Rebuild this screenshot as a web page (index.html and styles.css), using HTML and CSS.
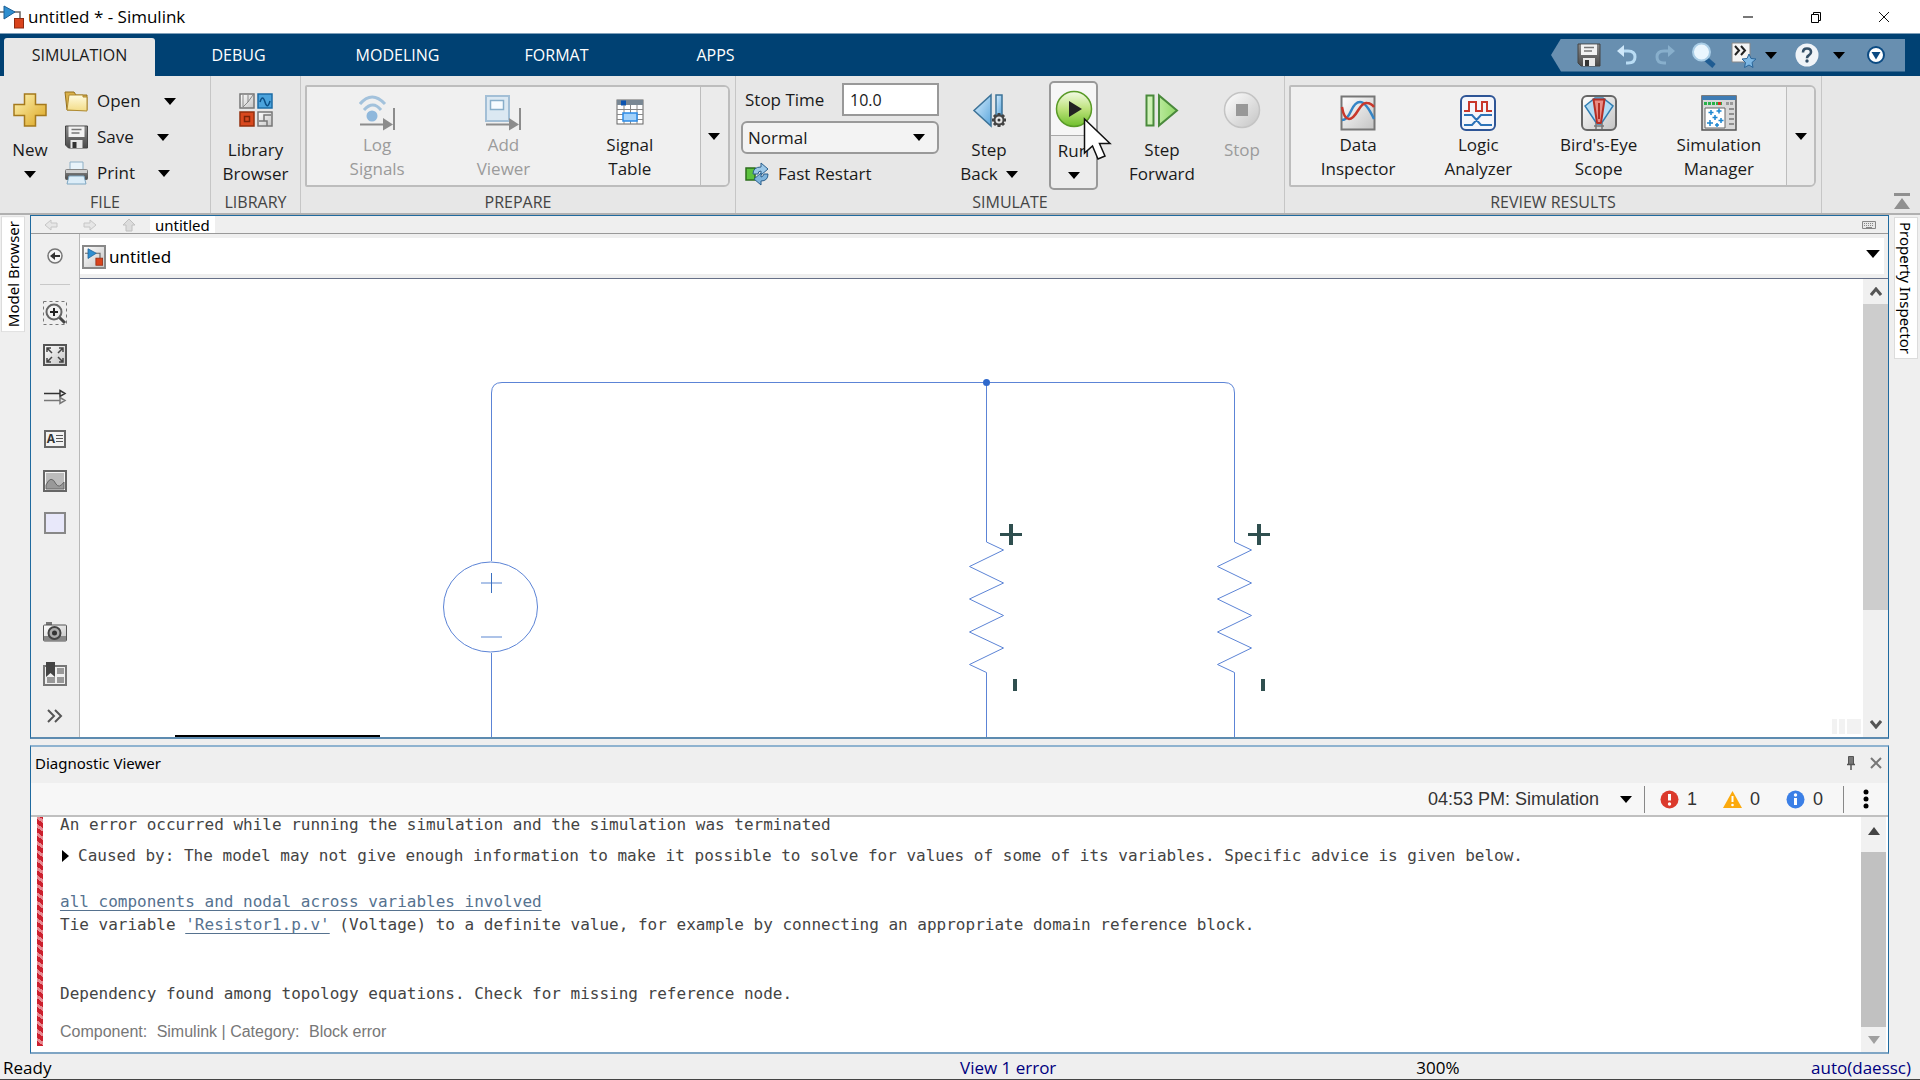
FILE: index.html
```html
<!DOCTYPE html>
<html lang="en">
<head>
<meta charset="utf-8">
<title>untitled * - Simulink</title>
<link rel="stylesheet" href="styles.css">
</head>
<body>
<svg class="defs" aria-hidden="true">
  <defs>
    <linearGradient id="gold" x1="0" y1="0" x2="1" y2="1"><stop offset="0" stop-color="#fff6b8"/><stop offset="1" stop-color="#dba31c"/></linearGradient>
    <linearGradient id="paper" x1="0" y1="0" x2="0" y2="1"><stop offset="0" stop-color="#fffbe0"/><stop offset="1" stop-color="#f3dc86"/></linearGradient>
    <linearGradient id="steel" x1="0" y1="0" x2="0" y2="1"><stop offset="0" stop-color="#8a8a8a"/><stop offset="1" stop-color="#4a4a4a"/></linearGradient>
    <linearGradient id="silver" x1="0" y1="0" x2="1" y2="1"><stop offset="0" stop-color="#ffffff"/><stop offset="1" stop-color="#c4c4c4"/></linearGradient>
    <linearGradient id="sky" x1="0" y1="0" x2="1" y2="1"><stop offset="0" stop-color="#d9efff"/><stop offset="1" stop-color="#5ba6dc"/></linearGradient>
    <linearGradient id="green" x1="0" y1="0" x2="0" y2="1"><stop offset="0" stop-color="#f4fbe6"/><stop offset=".5" stop-color="#bde27c"/><stop offset="1" stop-color="#6fbf2c"/></linearGradient>
    <linearGradient id="mint" x1="0" y1="0" x2="1" y2="0"><stop offset="0" stop-color="#d6f5c0"/><stop offset="1" stop-color="#8fd866"/></linearGradient>
    <symbol id="caret" viewBox="0 0 12 7"><path d="M0 0h12L6 7z"/></symbol>
    <symbol id="disk" viewBox="0 0 24 24"><path d="M1 1h22v22H4l-3-3z" fill="url(#steel)" stroke="#444"/><path d="M4 1.500h16V12H4z" fill="#f2f2f2"/><path d="M7 4.500h10M7 8h8" stroke="#777" stroke-width="1.500"/><path d="M6 15h12v8H6z" fill="#e8e8e8"/><path d="M8 17h4v6H8z" fill="#333"/></symbol>
    <symbol id="model" viewBox="0 0 24 24"><path d="M0 7h4M14 7h6v7" fill="none" stroke="#666" stroke-width="1.500"/><path d="M4 1l11 6-11 7z" fill="#2f8fd0" stroke="#1d5f94"/><rect x="14.500" y="13.500" width="9" height="9.500" fill="#d9431c" stroke="#8f2a10"/></symbol>
  </defs>
</svg>

<header class="titlebar">
  <svg class="app-icon" viewBox="0 0 24 24"><use href="#model"/></svg>
  <span class="title">untitled * - Simulink</span>
  <div class="window-buttons">
    <button aria-label="Minimize"><svg width="12" height="12"><path d="M1 6h10" stroke="#777" stroke-width="2"/></svg></button>
    <button aria-label="Restore"><svg width="12" height="12" fill="none" stroke="#000"><path d="M1.500 3.500h7v8h-7zM3.500 3.500v-2h7v8h-2"/></svg></button>
    <button aria-label="Close"><svg width="12" height="12" fill="none" stroke="#111"><path d="M1 1l10 10M11 1L1 11"/></svg></button>
  </div>
</header>

<nav class="tabstrip">
  <a class="tab active" href="#">SIMULATION</a>
  <a class="tab" href="#">DEBUG</a>
  <a class="tab" href="#">MODELING</a>
  <a class="tab" href="#">FORMAT</a>
  <a class="tab" href="#">APPS</a>
  <div class="quick">
    <button aria-label="Save"><svg width="24" height="24"><use href="#disk"/></svg></button>
    <button aria-label="Undo"><svg width="24" height="24" viewBox="0 0 24 24"><path d="M7 8h6q7 0 7 6t-7 6h-2" fill="none" stroke="#b9dcf4" stroke-width="3"/><path d="M2 8l7-6v12z" fill="#cfe8fa"/></svg></button>
    <button aria-label="Redo"><svg width="24" height="24" viewBox="0 0 24 24"><path d="M17 8h-6q-7 0-7 6t7 6h2" fill="none" stroke="#88afcc" stroke-width="3"/><path d="M22 8l-7-6v12z" fill="#88afcc"/></svg></button>
    <button class="q-search" aria-label="Search"><svg width="26" height="26" viewBox="0 0 26 26"><path d="M15 17l8 7" stroke="#1f5c92" stroke-width="5"/><circle cx="10.500" cy="10" r="8.500" fill="#eaf6fe" stroke="#a9cde6" stroke-width="2"/></svg></button>
    <button class="q-star" aria-label="Favorites"><svg width="25" height="26" viewBox="0 0 25 26"><path d="M1 1h18v19H1z" fill="#f4f4f4" stroke="#888"/><path d="M4 4l4 4.500L4 13M10 4l4 4.500-4 4.500" fill="none" stroke="#222" stroke-width="2"/><path d="M18 12l2 4.500 5 .5-4 3.500 1 5-4-2.500-4.500 2.500 1-5-3.500-3.500 5-.5z" fill="#7eb8e4" stroke="#2a6498"/></svg></button>
    <button class="q-star-menu" aria-label="Favorites menu"><svg class="caret"><use href="#caret"/></svg></button>
    <button class="q-help" aria-label="Help"><svg width="24" height="24" viewBox="0 0 24 24"><circle cx="12" cy="12" r="11.500" fill="#f0f4f8"/><path d="M8 9.500q0-4 4-4t4 3.500q0 2-2 3.200t-2 3" fill="none" stroke="#355067" stroke-width="2.600"/><circle cx="12" cy="18" r="1.700" fill="#355067"/></svg></button>
    <button aria-label="Help menu"><svg class="caret"><use href="#caret"/></svg></button>
    <button class="q-more" aria-label="More"><svg width="18" height="18" viewBox="0 0 18 18"><circle cx="9" cy="9" r="8" fill="#fff" stroke="#0b4a82" stroke-width="2"/><path d="M4.500 6h9L9 13.500z" fill="#0b4a82"/></svg></button>
  </div>
</nav>

<section class="ribbon" aria-label="Simulation tools">
  <div class="group file">
    <div class="group-body">
      <button class="big">
        <svg width="34" height="34" viewBox="0 0 34 34"><path d="M11.500 1h11v10.500H33v11H22.500V33h-11V22.500H1v-11h10.500z" fill="url(#gold)" stroke="#a5791c" stroke-width="1.500"/></svg>
        <span>New</span><span class="drop"><svg class="caret"><use href="#caret"/></svg></span>
      </button>
      <div class="rows">
        <button class="row"><svg width="25" height="24" viewBox="0 0 25 24"><path d="M1 3h9l2 3h11v15H3z" fill="#d9b04a" stroke="#94701c"/><path d="M5 6h14v2h4v14L3 21z" fill="url(#paper)" stroke="#b08b32"/></svg><span>Open</span><svg class="caret"><use href="#caret"/></svg></button>
        <button class="row"><svg width="25" height="24"><use href="#disk"/></svg><span>Save</span><svg class="caret"><use href="#caret"/></svg></button>
        <button class="row"><svg width="25" height="24" viewBox="0 0 25 24"><path d="M6 1h13v9H6z" fill="#e8f3fa" stroke="#8fb0c6"/><rect x="1" y="8" width="23" height="11" rx="2" fill="url(#steel)"/><path d="M2 9h21v3H2z" fill="#d0d0d0"/><path d="M5 15h15l2 8H3z" fill="#dcedf8" stroke="#7fa7c2"/></svg><span>Print</span><svg class="caret"><use href="#caret"/></svg></button>
      </div>
    </div>
    <h2>FILE</h2>
  </div>

  <div class="group library">
    <div class="group-body">
      <button class="big">
        <svg width="34" height="34" viewBox="0 0 34 34"><rect x="1" y="1" width="14" height="14" fill="url(#silver)" stroke="#777" stroke-width="1.500"/><path d="M4 2v12l5-5V2M9 9l5-7" fill="none" stroke="#888"/><rect x="19" y="1" width="14" height="14" fill="#4ba3dc" stroke="#1c6ca6" stroke-width="1.500"/><path d="M21 9q2.500-8 5 0t5-1" fill="none" stroke="#0c4f86" stroke-width="1.500"/><rect x="1" y="19" width="14" height="14" fill="#d9491f" stroke="#93300f" stroke-width="1.500"/><rect x="5.500" y="23.500" width="5" height="5" fill="none" stroke="#7c2409" stroke-width="1.500"/><rect x="19" y="19" width="14" height="14" fill="url(#silver)" stroke="#777" stroke-width="1.500"/><path d="M20 28h5v-6h7M25 28h3v5" fill="none" stroke="#777" stroke-width="1.500"/></svg>
        <span>Library</span><span>Browser</span>
      </button>
    </div>
    <h2>LIBRARY</h2>
  </div>

  <div class="group prepare">
    <div class="group-body">
      <div class="gallery">
        <button disabled><svg width="36" height="36" viewBox="0 0 36 36"><path d="M1 9q12-14 25 0M5 15q9-10 17 0" fill="none" stroke="#a3c2dc" stroke-width="3"/><circle cx="13" cy="21" r="5.500" fill="#8fb8dc"/><path d="M1 29.500h25M35 13v22" stroke="#8c8c8c" stroke-width="2"/><path d="M24 23l10 6.500-10 6z" fill="#8c8c8c"/></svg><span>Log</span><span>Signals</span></button>
        <button disabled><svg width="36" height="36" viewBox="0 0 36 36"><rect x="1" y="1" width="23" height="25" fill="#dbe8f2" stroke="#a3bfd6" stroke-width="2"/><rect x="5.500" y="5.500" width="13" height="9" fill="#f6fbff" stroke="#88aeca" stroke-width="1.500"/><path d="M1 29.500h25M35 13v22" stroke="#8c8c8c" stroke-width="2"/><path d="M24 23l10 6.500-10 6z" fill="#8c8c8c"/></svg><span>Add</span><span>Viewer</span></button>
        <button><svg width="36" height="36" viewBox="0 0 36 36"><rect x="5" y="5" width="26" height="24" fill="#fff" stroke="#666"/><path d="M5 5h26v5H5z" fill="#7a8894"/><path d="M9 5.500h5v5H9z" fill="#0b54b0"/><path d="M5 14.500h26M5 19.500h26M5 24.500h26M12 10v19M18.500 10v19M25 10v19" stroke="#888"/><rect x="11" y="18" width="14" height="8" fill="#a4d2fa" stroke="#2b8ae6" stroke-width="1.500"/></svg><span>Signal</span><span>Table</span></button>
        <button class="more" aria-label="More prepare tools"><svg class="caret"><use href="#caret"/></svg></button>
      </div>
    </div>
    <h2>PREPARE</h2>
  </div>

  <div class="group simulate">
    <div class="group-body">
      <div class="settings">
        <div class="stop-time"><label for="stop">Stop Time</label><input id="stop" type="text" value="10.0"></div>
        <div class="select mode"><select aria-label="Simulation mode"><option>Normal</option></select><svg class="caret"><use href="#caret"/></svg></div>
        <button class="row fast"><svg width="25" height="24" viewBox="0 0 25 24"><rect x="1" y="6" width="9" height="12" fill="#5cc23e" stroke="#2c6e1c" stroke-width="1.500"/><path d="M8 12q0-7 8-7V1l7 6-7 6V9q-3 0-3 3z" fill="#9cc8e8" stroke="#2b5f8c"/><path d="M23 12q0 7-7 7v4l-7-6 7-6v4q2 0 3-3z" fill="#7fb4dc" stroke="#2b5f8c"/></svg><span>Fast Restart</span></button>
      </div>
      <button class="big step">
        <svg width="36" height="36" viewBox="0 0 36 36"><path d="M20 3v31L3 18.500z" fill="url(#sky)" stroke="#3d7398" stroke-width="1.500"/><path d="M25 3h6v20h-6z" fill="url(#sky)" stroke="#3d7398" stroke-width="1.500"/><path d="M28 21v14M21 28h14M23 23l10 10M33 23l-10 10" stroke="#444" stroke-width="3"/><circle cx="28" cy="28" r="4.500" fill="#e4e4e4" stroke="#444" stroke-width="2"/><circle cx="28" cy="28" r="1.500" fill="#333"/></svg>
        <span>Step</span><span>Back <svg class="caret"><use href="#caret"/></svg></span>
      </button>
      <div class="run">
        <button class="run-main" aria-label="Run simulation"><svg width="38" height="38" viewBox="0 0 38 38"><circle cx="19" cy="19" r="17.500" fill="url(#green)" stroke="#5a9b28" stroke-width="1.500"/><path d="M14 11v16l13-8z" fill="#222"/></svg></button>
        <button class="run-menu"><span>Run</span><span class="drop"><svg class="caret"><use href="#caret"/></svg></span></button>
        <svg class="pointer" viewBox="0 0 30 44"><path d="M1.500 2v34l8-7 5.500 13 7-3-5.500-12.500H27z" fill="#fff" stroke="#111" stroke-width="1.500"/></svg>
      </div>
      <button class="big step forward">
        <svg width="36" height="36" viewBox="0 0 36 36"><path d="M2.500 3.500h7v30h-7zM15 3.500v30L33 18.500z" fill="url(#mint)" stroke="#4a8a3c" stroke-width="2"/></svg>
        <span>Step</span><span>Forward</span>
      </button>
      <button class="big step stop" disabled>
        <svg width="38" height="38" viewBox="0 0 38 38"><circle cx="19" cy="19" r="17.500" fill="url(#silver)" stroke="#c4c4c4" stroke-width="1.500"/><path d="M13 13h12v12H13z" fill="#989898"/></svg>
        <span>Stop</span>
      </button>
    </div>
    <h2>SIMULATE</h2>
  </div>

  <div class="group review">
    <div class="group-body">
      <div class="gallery">
        <button><svg width="36" height="36" viewBox="0 0 36 36"><rect x="1.500" y="1.500" width="33" height="33" fill="url(#silver)" stroke="#777" stroke-width="2"/><path d="M2 25q5 0 9-9t9-9q6 0 14 17" fill="none" stroke="#3585c6" stroke-width="2.500"/><path d="M2 12q2 12 7 12 4 0 9-8.500T27 8q4 0 7 4" fill="none" stroke="#c8382c" stroke-width="2.500"/></svg><span>Data</span><span>Inspector</span></button>
        <button><svg width="36" height="36" viewBox="0 0 36 36"><rect x="1" y="1" width="34" height="34" rx="5" fill="#f4f6fb" stroke="#2e5596" stroke-width="2"/><path d="M4 16h5V7h7v9h6V7h5v9h5" fill="none" stroke="#c8382c" stroke-width="2"/><path d="M4 20h8l9 10h11M4 30h8l9-10h11" fill="none" stroke="#2b72b8" stroke-width="2"/></svg><span>Logic</span><span>Analyzer</span></button>
        <button><svg width="36" height="36" viewBox="0 0 36 36"><rect x="1" y="1" width="34" height="34" rx="5" fill="url(#silver)" stroke="#666" stroke-width="2"/><path d="M4 11l10-8h8l10 8-12 18h-4z" fill="#b4dcf4" stroke="#2f7db2" stroke-width="1.500"/><path d="M12.500 4.500h11L20 28h-4z" fill="#e98c84" stroke="#b52e24" stroke-width="2"/><path d="M18 8v16" stroke="#b52e24" stroke-width="2"/><path d="M15 28v6M21 28v6M13 31h10" stroke="#777" stroke-width="1.500"/></svg><span>Bird's-Eye</span><span>Scope</span></button>
        <button><svg width="36" height="36" viewBox="0 0 36 36"><rect x="1" y="1" width="34" height="34" fill="#d8d8d8" stroke="#555" stroke-width="1.500"/><path d="M1 1h34v4H1z" fill="#3f7cb4"/><path d="M3 8.500h18" stroke="#2ab04a" stroke-width="3" stroke-dasharray="3 1"/><path d="M17 8.500h3" stroke="#d83020" stroke-width="3"/><path d="M25 8.500h8" stroke="#999" stroke-width="3" stroke-dasharray="3 1"/><path d="M4 13h20v20H4z" fill="#fff" stroke="#666"/><path d="M10 15v5M7.500 17.500h5M18 13.500v5M15.500 16h5M14 20v5M11.500 22.500h5M20 23v5M17.500 25.500h5M9 25v6M6 28h6M16 28v4M14 30h4" stroke="#1c86d0" stroke-width="1.500"/><path d="M28 14h5M28 19h5M28 24h5M28 29h5" stroke="#777" stroke-width="1.500"/></svg><span>Simulation</span><span>Manager</span></button>
        <button class="more" aria-label="More review tools"><svg class="caret"><use href="#caret"/></svg></button>
      </div>
    </div>
    <h2>REVIEW RESULTS</h2>
  </div>
  <button class="collapse" aria-label="Minimize toolstrip"><svg width="16" height="16"><path d="M0 0h16v3H0zM8 5l8 11H0z" fill="#909090"/></svg></button>
</section>

<main class="workspace">
  <aside class="side left"><button class="side-tab">Model Browser</button></aside>

  <div class="center">
    <section class="editor" aria-label="Model editor">
      <div class="doc-tabs">
        <button aria-label="Back"><svg width="14" height="12"><path d="M1 6l6-5v3h6v4H7v3z" fill="#e6e6e6" stroke="#c6c6c6"/></svg></button>
        <button aria-label="Forward"><svg width="14" height="12"><path d="M13 6L7 1v3H1v4h6v3z" fill="#e6e6e6" stroke="#c6c6c6"/></svg></button>
        <button aria-label="Up"><svg width="14" height="14"><path d="M7 1l6 6h-3v6H4V7H1z" fill="#dcdcdc" stroke="#c0c0c0"/></svg></button>
        <a class="doc" href="#">untitled</a>
        <svg class="keyboard" width="14" height="8"><path d="M.5.500h13v7H.5z" fill="#e8e8e8" stroke="#888"/><path d="M2 2.500h10M2 4.500h10" stroke="#888" stroke-dasharray="1 1"/><path d="M4 6.500h6" stroke="#888"/></svg>
      </div>
      <div class="editor-body">
        <div class="palette">
          <button aria-label="Hide browser"><svg width="16" height="16" viewBox="0 0 16 16"><circle cx="8" cy="8" r="7" fill="#f6f6f6" stroke="#777" stroke-width="1.500"/><path d="M3 8l5-4v3h5v2H8v3z" fill="#333"/></svg></button>
          <hr>
          <button aria-label="Zoom"><svg width="24" height="24" viewBox="0 0 24 24"><path d="M.5.500h23v23H.5z" fill="none" stroke="#777" stroke-dasharray="3 3"/><path d="M16 16l6 6" stroke="#444" stroke-width="3"/><circle cx="11" cy="11" r="7.500" fill="#f2f2f2" stroke="#666" stroke-width="2"/><path d="M11 7v8M7 11h8" stroke="#222" stroke-width="2"/></svg></button>
          <button aria-label="Fit to view"><svg width="24" height="22" viewBox="0 0 24 22"><rect x="1" y="1" width="22" height="20" fill="url(#silver)" stroke="#555" stroke-width="2"/><path d="M4 8V4h4M4 4l5 5M16 4h4v4M20 4l-5 5M4 14v4h4M4 18l5-5M16 18h4v-4M20 18l-5-5" fill="none" stroke="#444" stroke-width="1.500"/></svg></button>
          <button aria-label="Sample time"><svg width="24" height="16" viewBox="0 0 24 16" fill="none" stroke-width="1.500"><path d="M1 4.500h16M17 1.500l5 3-5 3z" stroke="#333"/><path d="M1 11.500h16M17 8.500l5 3-5 3z" stroke="#777"/></svg></button>
          <button aria-label="Annotation" class="annotation"><span>A</span><svg width="7" height="10"><path d="M0 1.500h7M0 4.500h7M0 7.500h7" stroke="#555"/></svg></button>
          <button aria-label="Image"><svg width="24" height="22" viewBox="0 0 24 22"><rect x="1" y="1" width="22" height="20" fill="#f4f4f4" stroke="#666" stroke-width="2"/><path d="M3 3h18v16H3z" fill="#bcbcbc"/><path d="M3 15q5-11 10-1 3 5 8-2v7H3z" fill="#999" stroke="#666"/></svg></button>
          <button aria-label="Area"><svg width="22" height="22"><path d="M1 1h20v20H1z" fill="#e8e8fa" stroke="#888" stroke-width="2"/></svg></button>
          <button class="bottom" aria-label="Screenshot"><svg width="24" height="20" viewBox="0 0 24 20"><path d="M3 0h6v4H3z" fill="#777"/><rect x=".5" y="3" width="23" height="16" rx="1" fill="url(#silver)" stroke="#555"/><path d="M1 14h22v5H1z" fill="#888"/><circle cx="11.500" cy="11" r="6" fill="#aaa" stroke="#444" stroke-width="2"/><circle cx="11.500" cy="11" r="2.500" fill="#333"/></svg></button>
          <button aria-label="Viewmarks"><svg width="24" height="24" viewBox="0 0 24 24"><rect x="1" y="4" width="22" height="19" fill="#f0f0f0" stroke="#777" stroke-width="2"/><path d="M14 6h7v6h-7zM14 15h7v6h-7zM4 15h8v6H4z" fill="#999"/><path d="M3 0h9v15l-4.500-4L3 15z" fill="#444"/></svg></button>
          <button aria-label="More"><svg width="16" height="14" fill="none" stroke="#555" stroke-width="2"><path d="M1 1l6 6-6 6M8 1l6 6-6 6"/></svg></button>
        </div>
        <div class="stage">
          <div class="address">
            <svg class="crumb-icon" viewBox="0 0 24 24"><rect x="1" y="1" width="22" height="22" fill="url(#silver)" stroke="#888" stroke-width="2"/><g transform="translate(3 3) scale(.75)"><use href="#model" width="24" height="24"/></g></svg>
            <span>untitled</span>
            <button aria-label="Model history"><svg class="caret wide"><use href="#caret"/></svg></button>
          </div>
          <div class="canvas-row">
            <svg class="canvas" role="img" aria-label="Circuit with a source and two resistors">
              <g fill="none" stroke="#5c84d6">
                <path d="M411.500 282V114q0-10.500 10.500-10.500h722q10.500 0 10.500 10.500v149M906.500 103.500V263M411.500 374V2000"/>
                <ellipse cx="410.500" cy="328" rx="47" ry="45"/>
                <path d="M401 304h21M401 358h21" stroke="#adc3e8" stroke-width="2"/>
                <path d="M411.500 294v20" stroke="#3a6fc0"/>
                <path id="zigzag" d="M906.500 263l17 8-34 16.500 34 16.500-34 16 34 16.500-34 16.500 34 16-34 16.500 17 8V2000"/>
                <use href="#zigzag" x="248"/>
              </g>
              <circle cx="906.500" cy="103.500" r="3.500" fill="#2f69cc"/>
              <g id="polarity" fill="#2f4f4f"><path d="M920 254h22v3h-22zM929 245h4v21h-4zM933 400h4v12h-4z"/></g>
              <use href="#polarity" x="248"/>
            </svg>
            <div class="block-edge"></div>
            <div class="resize-grip"></div>
            <div class="scroll">
              <svg width="12" height="9" viewBox="0 0 12 9"><path d="M1 8l5-6 5 6" fill="none" stroke="#555" stroke-width="3"/></svg>
              <div class="track"><div class="thumb"></div></div>
              <svg width="12" height="9" viewBox="0 0 12 9"><path d="M1 1l5 6 5-6" fill="none" stroke="#555" stroke-width="3"/></svg>
            </div>
          </div>
        </div>
      </div>
    </section>

    <section class="diagnostics">
      <div class="diag-head">
        <h3>Diagnostic Viewer</h3>
        <button aria-label="Pin"><svg width="8" height="14"><path d="M1.500.500h5v8h-5z" fill="#777" stroke="#555"/><path d="M0 8.500h8M4 9v5" stroke="#555" stroke-width="1.500"/></svg></button>
        <button aria-label="Close"><svg width="12" height="12"><path d="M1 1l10 10M11 1L1 11" stroke="#777" stroke-width="2"/></svg></button>
      </div>
      <div class="diag-tools">
        <div class="select time"><select aria-label="Diagnostic run"><option>04:53 PM: Simulation</option></select><svg class="caret"><use href="#caret"/></svg></div>
        <div class="counts">
          <span><svg width="19" height="19"><circle cx="9.500" cy="9.500" r="9" fill="#db3a2c"/><path d="M9.500 4v6.500" stroke="#fff" stroke-width="3"/><circle cx="9.500" cy="14" r="1.700" fill="#fff"/></svg>1</span>
          <span><svg width="19" height="19"><path d="M9.500 1L19 18H0z" fill="#fba90d"/><path d="M9.500 6v6" stroke="#fff" stroke-width="2"/><circle cx="9.500" cy="15" r="1.300" fill="#fff"/></svg>0</span>
          <span><svg width="19" height="19"><circle cx="9.500" cy="9.500" r="9" fill="#3b7fe6"/><path d="M9.500 8v7" stroke="#fff" stroke-width="3"/><circle cx="9.500" cy="5" r="1.700" fill="#fff"/></svg>0</span>
        </div>
        <button class="kebab" aria-label="Options"><svg width="6" height="20"><circle cx="3" cy="3" r="2.500"/><circle cx="3" cy="10" r="2.500"/><circle cx="3" cy="17" r="2.500"/></svg></button>
      </div>
      <div class="diag-body">
        <article class="log">
          <p class="summary">An error occurred while running the simulation and the simulation was terminated</p>
          <p class="cause"><svg width="7" height="12"><path d="M0 0l7 6-7 6z"/></svg>Caused by: The model may not give enough information to make it possible to solve for values of some of its variables. Specific advice is given below.</p>
          <p><a href="#">all components and nodal across variables involved</a><br>Tie variable <a href="#">'Resistor1.p.v'</a> (Voltage) to a definite value, for example by connecting an appropriate domain reference block.</p>
          <p class="dependency">Dependency found among topology equations. Check for missing reference node.</p>
          <p class="source"><span>Component:</span> <span>Simulink | Category:</span> <span>Block error</span></p>
        </article>
        <div class="scroll small">
          <svg width="12" height="8"><path d="M6 0l6 8H0z" fill="#444"/></svg>
          <div class="track"><div class="thumb"></div></div>
          <svg width="12" height="8"><path d="M0 0h12L6 8z" fill="#a0a0a0"/></svg>
        </div>
      </div>
    </section>
  </div>

  <aside class="side right"><button class="side-tab">Property Inspector</button></aside>
</main>

<footer class="status">
  <span>Ready</span>
  <a class="errors" href="#">View 1 error</a>
  <span class="zoom">300%</span>
  <a class="solver" href="#">auto(daessc)</a>
</footer>
</body>
</html>
```
FILE: styles.css
```css
* { box-sizing: border-box; }

body {
  margin: 0;
  min-height: 100vh;
  display: flex;
  flex-direction: column;
  background: #efefef;
  color: #1a1a1a;
  font: 17px/24px "Open Sans", "Noto Sans", sans-serif;
}

button, input, select { font: inherit; color: inherit; }
button { display: flex; align-items: center; justify-content: center; border: 0; padding: 0; background: none; }
button:disabled { color: #9b9b9b; }
a { color: inherit; text-decoration: none; }
h2, h3, p { margin: 0; font-weight: 400; }
svg { flex: none; display: block; }
.defs { position: absolute; width: 0; height: 0; }
.caret { width: 12px; height: 7px; fill: #000; }

/* title bar */
.titlebar { display: flex; align-items: center; height: 34px; background: #fff; border-bottom: 1px solid #7f9fb9; color: #000; }
.app-icon { width: 24px; height: 30px; }
.title { padding-left: 4px; }
.window-buttons { margin-left: auto; display: flex; padding-right: 2px; }
.window-buttons button { width: 68px; height: 32px; }

/* toolstrip tabs */
.tabstrip { display: flex; align-items: flex-end; height: 42px; padding-left: 4px; background: #004173; color: #fff; font-size: 16px; }
.tab { min-width: 159px; height: 38px; text-align: center; line-height: 34px; }
.tab.active { min-width: 151px; margin-right: 4px; border-radius: 3px 3px 0 0; background: #e7e7e7; color: #1a1a1a; }
.quick { margin-left: auto; margin-right: 15px; display: flex; align-items: center; gap: 14px; height: 33px; width: 354px; padding-left: 26px; align-self: center; background: #688fb0; clip-path: polygon(0 50%, 10px 0, 100% 0, 100% 100%, 10px 100%); }
.q-star-menu { margin: 0 4px 0 -5px; }
.q-more { margin-left: 8px; }

/* ribbon */
.ribbon { display: flex; height: 139px; background: #e7e7e7; border-bottom: 2px solid #b0b0b0; }
.group { display: flex; flex-direction: column; padding-top: 5px; border-right: 1px solid #c6c6c6; }
.group-body { display: flex; height: 112px; }
.group h2 { color: #444; font-size: 16px; line-height: 22px; text-align: center; }
.file { width: 211px; }
.library { width: 90px; }
.prepare { width: 435px; }
.simulate { width: 549px; }
.review { width: 537px; }
.big { display: flex; flex-direction: column; justify-content: flex-start; align-items: center; padding-top: 12px; min-width: 60px; }
.big > svg { margin-bottom: 11px; }
.big span { display: flex; align-items: center; justify-content: center; gap: 8px; height: 24px; }
.library .big { width: 89px; }
.drop { height: 24px; }
.rows { display: flex; flex-direction: column; padding: 2px 0 0 4px; }
.row { justify-content: flex-start; height: 36px; gap: 8px; }
.row .caret { margin-left: 15px; }

.gallery { display: flex; height: 102px; margin: 4px 5px 2px 4px; flex: 1; padding-left: 7px; background: #f0f0f0; border: 2px solid #bdbdbd; border-radius: 2px 6px 6px 2px; }
.gallery button { flex: 1; flex-direction: column; justify-content: flex-start; padding-top: 8px; }
.gallery button svg { margin-bottom: 2px; }
.gallery .more { flex: none; width: 28px; margin-left: 7px; border-left: 1px solid #bdbdbd; background: #ebebeb; justify-content: center; padding: 0; border-radius: 0 4px 4px 0; }
.gallery .more svg { margin: 0; }

.settings { width: 207px; padding: 2px 4px 0 5px; }
.stop-time { display: flex; align-items: center; justify-content: space-between; padding-left: 4px; height: 33px; }
.stop-time input { width: 97px; height: 33px; padding: 0 6px; border: 2px solid #999; background: #fff; font-size: 16px; }
.select { position: relative; display: flex; align-items: center; }
.select select { appearance: none; width: 100%; background: transparent; border: 0; padding: 0; }
.select .caret { position: absolute; right: 12px; pointer-events: none; }
.mode { height: 33px; margin: 5px 0 4px; border: 2px solid #999; border-radius: 6px; background: #f3f3f3; }
.mode select { padding-left: 5px; }
.fast { padding-left: 4px; height: 32px; }
.simulate .step { width: 92px; padding-top: 11px; }
.step > svg { margin-bottom: 10px; }
.simulate .forward { width: 96px; margin-left: 16px; }
.simulate .stop { width: 64px; padding-top: 10px; }
.simulate .stop > svg { margin-bottom: 9px; }
.run { position: relative; width: 49px; height: 109px; margin-left: 14px; border: 2px solid #999; border-radius: 5px; background: #ececec; }
.run-main { width: 100%; height: 53px; align-items: center; background: #f6f6f6; border-bottom: 1px solid #aaa; border-radius: 4px 4px 0 0; }
.run-menu { width: 100%; height: 52px; flex-direction: column; justify-content: flex-start; padding-top: 3px; }
.run-menu .drop { display: flex; align-items: center; }
.pointer { position: absolute; left: 32px; top: 34px; width: 30px; height: 44px; }
.collapse { margin-left: auto; margin-right: 10px; padding-bottom: 4px; align-items: flex-end; }

/* workspace */
.workspace { flex: 1; display: flex; font-family: "Noto Sans", "Open Sans", sans-serif; color: #000; }
.side { width: 30px; padding: 1px; }
.right { width: 31px; padding: 2px 3px 0 5px; }
.side-tab { writing-mode: vertical-rl; width: 24px; padding: 4px 0; background: #fff; border: 1px solid #dcdcdc; font-size: 15px; line-height: 22px; }
.left .side-tab { transform: rotate(180deg); }
.center { flex: 1; min-width: 0; display: flex; flex-direction: column; gap: 6px; }

.editor { flex: 1; display: flex; flex-direction: column; border: 1px solid #1f6a9f; border-bottom: 2px solid #5d8bb0; }
.doc-tabs { display: flex; align-items: center; height: 18px; padding-left: 13px; border-bottom: 1px solid #999; font-size: 15px; }
.doc-tabs button { width: 14px; margin-right: 25px; }
.doc-tabs button:nth-child(3) { margin-right: 14px; }
.doc { height: 17px; line-height: 18px; padding: 0 5px; background: #fff; }
.keyboard { margin-left: auto; margin-right: 12px; }
.editor-body { flex: 1; display: flex; }
.palette { width: 49px; border-right: 1px solid #b8b8b8; display: flex; flex-direction: column; align-items: center; padding-top: 1px; }
.palette button { height: 42px; width: 48px; }
.palette hr { width: 30px; margin: 7px 0; border: 0; border-top: 1px solid #c8c8c8; }
.palette .bottom { margin-top: auto; }
.palette .annotation { width: 22px; height: 18px; margin: 12px 0; gap: 1px; border: 2px solid #666; background: #f2f2f2; font: bold 12px/12px "Open Sans", sans-serif; color: #333; }
.stage { flex: 1; min-width: 0; display: flex; flex-direction: column; }
.address { display: flex; align-items: center; height: 44px; padding: 1px 0 0 2px; background: #fff; border: 4px solid #efefef; border-width: 4px 4px 4px 0; box-shadow: 0 1px #667088; }
.crumb-icon { width: 24px; height: 24px; margin-right: 3px; }
.address button { margin-left: auto; margin-right: 2px; padding: 0 2px 5px 0; }
.wide { width: 14px; height: 8px; }
.canvas-row { position: relative; flex: 1; display: flex; background: #fff; margin-top: 1px; }
.canvas { flex: 1; min-width: 0; height: auto; overflow: hidden; contain: size; }
.block-edge { position: absolute; left: 95px; bottom: 0; width: 205px; height: 2px; background: #000; }
.resize-grip { align-self: flex-end; width: 29px; height: 15px; margin: 0 2px 3px 0; background: linear-gradient(90deg, #f2f2f2 5px, #fff 5px 7px, #f2f2f2 7px 13px, #fff 13px 15px, #f2f2f2 15px); }

.scroll { width: 25px; display: flex; flex-direction: column; align-items: center; gap: 8px; padding: 8px 0; background: #f0f0f0; }
.track { flex: 1; align-self: stretch; }
.thumb { height: 75%; background: #cdcdcd; }

/* diagnostic viewer */
.diagnostics { border: 1px solid #1f6a9f; border-top: 2px solid #8fb3d0; border-bottom: 2px solid #7fa5c4; }
.diag-head { display: flex; align-items: center; gap: 15px; height: 36px; padding: 0 6px 5px 4px; }
.diag-head h3 { font-size: 15px; margin-right: auto; }
.diag-tools { display: flex; align-items: center; height: 34px; background: #f7f7f7; border-bottom: 2px solid #c0c0c0; justify-content: flex-end; font: 18px/24px "Liberation Sans", sans-serif; color: #333; }
.time { width: 217px; height: 27px; border-right: 1px solid #888; }
.counts { display: flex; gap: 35px; width: 199px; height: 27px; align-items: center; padding-left: 15px; border-right: 1px solid #888; }
.counts span { display: flex; align-items: center; gap: 8px; width: 28px; }
.kebab { width: 44px; }
.diag-body { display: flex; background: #fff; }
.log { flex: 1; min-width: 0; margin: 0 0 6px 6px; padding-left: 23px; font: 16px/23px "DejaVu Sans Mono", monospace; color: #444; background: repeating-linear-gradient(35deg, #cc1f2d 0 4px, #e88a92 4px 7px) left / 6px 100% no-repeat; }
.log p { margin-bottom: 23px; }
.log .summary { line-height: 16px; margin-bottom: 11px; }
.log .cause { display: flex; align-items: center; gap: 9px; padding-left: 2px; }
.log a { color: #56728f; text-decoration: underline; text-underline-offset: 3px; }
.log .dependency { margin: 46px 0 0; }
.log .source { margin: 15px 0 0; padding-bottom: 3px; font: 16px/23px "Liberation Sans", sans-serif; color: #777; }
.source span + span { margin-left: 5px; }
.small { padding: 10px 0 8px; gap: 17px; margin-right: 2px; background: #f1f1f1; }
.small .track { margin-bottom: -8px; }
.small .thumb { height: 100%; background: #c1c1c1; }

/* status bar */
.status { display: flex; height: 26px; padding: 0 9px 0 3px; border-bottom: 1px solid #444; color: #000; line-height: 28px; }
.status span, .status a { flex: none; }
.status span:first-child { width: 50%; margin-right: 3px; }
.errors, .solver { color: #000080; }
.zoom { margin-left: 360px; }
.solver { margin-left: auto; }
```
